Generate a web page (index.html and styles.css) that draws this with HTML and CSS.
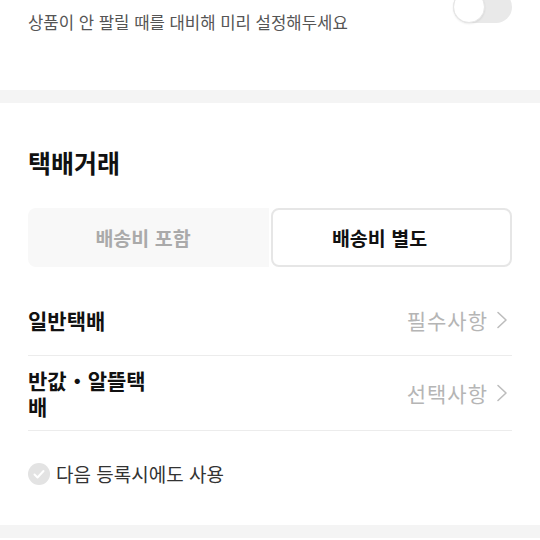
FILE: index.html
```html
<!DOCTYPE html>
<html lang="ko">
<head>
<meta charset="utf-8">
<link rel="stylesheet" href="styles.css">
</head>
<body>
<div class="top">
  <p class="desc">상품이 안 팔릴 때를 대비해 미리 설정해두세요</p>
  <div class="toggle"><span class="knob"></span></div>
</div>
<div class="band"></div>
<section class="delivery">
  <h2 class="title">택배거래</h2>
  <div class="seg">
    <div class="seg-item">배송비 포함</div>
    <div class="seg-item active">배송비 별도</div>
  </div>
  <div class="row">
    <div class="label">일반택배</div>
    <div class="value">필수사항 <svg class="chev" viewBox="0 0 12 18" width="12" height="18"><path d="M2 1.5 L10 9 L2 16.5" fill="none" stroke="#bdbdbd" stroke-width="1.6" stroke-linecap="round" stroke-linejoin="round"/></svg></div>
  </div>
  <div class="row tall">
    <div class="label narrow">반값・알뜰택배</div>
    <div class="value">선택사항 <svg class="chev" viewBox="0 0 12 18" width="12" height="18"><path d="M2 1.5 L10 9 L2 16.5" fill="none" stroke="#bdbdbd" stroke-width="1.6" stroke-linecap="round" stroke-linejoin="round"/></svg></div>
  </div>
  <div class="check">
    <span class="circle"><svg viewBox="0 0 22 22" width="22" height="22"><circle cx="11" cy="11" r="11" fill="#e3e3e3"/><path d="M6.5 11.5 L9.5 14.5 L15.5 8" fill="none" stroke="#fff" stroke-width="2" stroke-linecap="round" stroke-linejoin="round"/></svg></span>
    <span class="check-text">다음 등록시에도 사용</span>
  </div>
</section>
<div class="band"></div>
</body>
</html>
```
FILE: styles.css
```css
* { box-sizing: border-box; }
html, body { margin: 0; padding: 0; background: #fff; }
body {
  font-family: "Noto Sans CJK KR", "Noto Sans", sans-serif;
  color: #111;
  width: 540px;
  overflow: hidden;
}
.top {
  display: flex;
  justify-content: space-between;
  align-items: flex-start;
  padding: 0 28px;
  height: 90px;
}
.desc {
  margin: 10px 0 0;
  font-size: 16.7px;
  line-height: 24px;
  color: #555;
}
.toggle {
  margin-top: -9px;
  width: 59px;
  height: 32px;
  border-radius: 16px;
  background: #e9e9e9;
  position: relative;
}
.knob {
  position: absolute;
  left: 0;
  top: 0;
  width: 32px;
  height: 32px;
  border-radius: 50%;
  background: #fff;
  border: 1px solid #e6e6e6;
  box-shadow: 0 1px 2px rgba(0,0,0,0.08);
}
.band { height: 13px; background: #f4f4f4; }
.delivery { padding: 0 28px; height: 422px; }
.title {
  margin: 0;
  padding-top: 43px;
  font-size: 25px;
  line-height: 32px;
  font-weight: 700;
  color: #111;
}
.seg {
  margin-top: 30px;
  display: grid;
  grid-template-columns: 1fr 1fr;
  gap: 2px;
  height: 59px;
}
.seg-item {
  display: flex;
  align-items: center;
  justify-content: center;
  font-size: 19.5px;
  font-weight: 700;
  color: #aaa;
  background: #f8f8f8;
  border-radius: 8px 0 0 8px;
  padding-right: 11px;
}
.seg-item.active {
  background: #fff;
  color: #111;
  border: 2px solid #e6e6e6;
  border-radius: 8px;
  padding-right: 24px;
}
.row {
  display: flex;
  justify-content: space-between;
  align-items: center;
  min-height: 72px;
  border-bottom: 1px solid #ececec;
  margin-top: 17px;
}
.row.tall { margin-top: 0; padding: 11px 0; }
.label {
  font-size: 21px;
  line-height: 26px;
  font-weight: 700;
  color: #111;
}
.label.narrow { width: 125px; }
.value {
  display: flex;
  align-items: center;
  gap: 8px;
  font-size: 21px;
  letter-spacing: 1px;
  color: #b5b5b5;
  margin-right: 4px;
}
.chev { display: block; }
.check {
  display: flex;
  align-items: center;
  gap: 6px;
  margin-top: 31px;
}
.circle { display: block; width: 22px; height: 22px; }
.circle svg { display: block; }
.check-text { font-size: 19px; color: #333; line-height: 24px; }
```
